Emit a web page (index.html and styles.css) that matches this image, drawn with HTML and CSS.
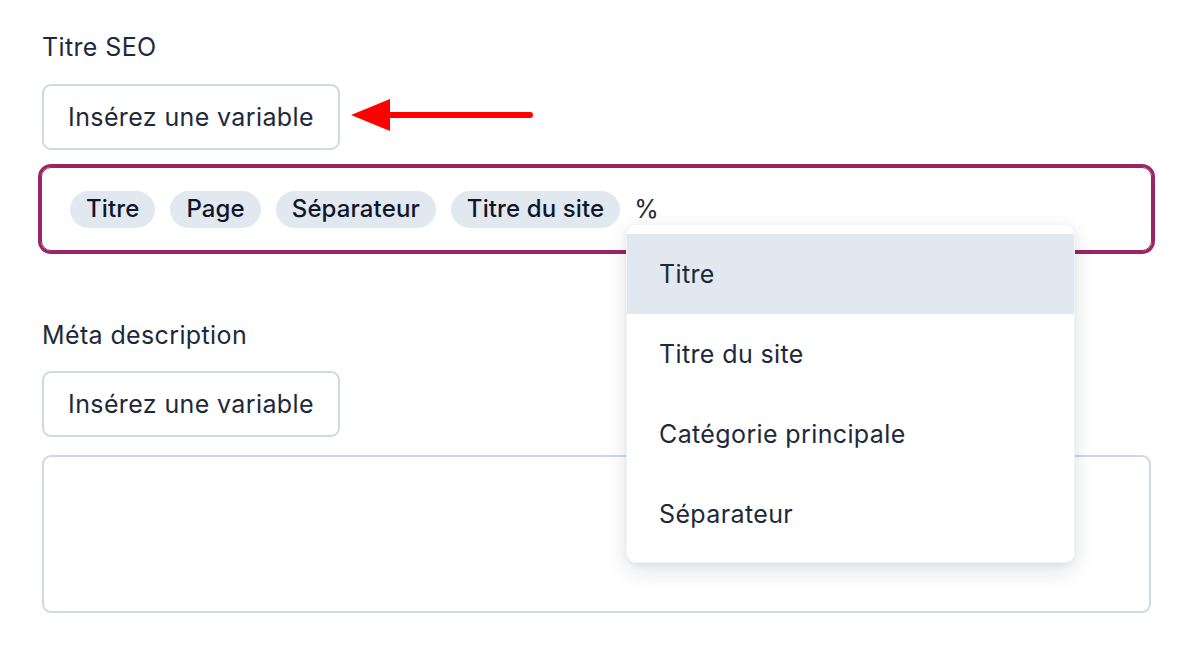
FILE: index.html
```html
<!DOCTYPE html>
<html lang="fr">
<head>
<meta charset="utf-8">
<title>SEO</title>
<link rel="stylesheet" href="styles.css">
</head>
<body>
<div class="page">
  <div class="field">
    <div class="label">Titre SEO</div>
    <div class="btn-row">
      <button class="var-btn">Insérez une variable</button>
      <svg class="arrow" width="184" height="34" viewBox="0 0 184 34">
        <polygon points="0,17 39,1 39,33" fill="#ff0000"/>
        <line x1="36" y1="17" x2="179" y2="17" stroke="#ff0000" stroke-width="6" stroke-linecap="round"/>
      </svg>
    </div>
    <div class="input focused">
      <span class="chip">Titre</span>
      <span class="chip">Page</span>
      <span class="chip">Séparateur</span>
      <span class="chip">Titre du site</span>
      <span class="typed">%</span>
      <div class="menu">
        <div class="item active">Titre</div>
        <div class="item">Titre du site</div>
        <div class="item">Catégorie principale</div>
        <div class="item">Séparateur</div>
      </div>
    </div>
  </div>
  <div class="field second">
    <div class="label">Méta description</div>
    <div class="btn-row">
      <button class="var-btn">Insérez une variable</button>
    </div>
    <div class="textarea"></div>
  </div>
</div>
</body>
</html>
```

FILE: styles.css
```css
* { box-sizing: border-box; }
html, body { margin: 0; padding: 0; background: #ffffff; }
body {
  font-family: Inter, "Noto Sans", "Liberation Sans", sans-serif;
  color: #1e293b;
  font-size: 25px;
  letter-spacing: 0.015em;
}
.page {
  padding: 32px 53px 0 42px;
}
.label {
  line-height: 30px;
  height: 30px;
  font-weight: 400;
}
.btn-row {
  display: flex;
  align-items: center;
  gap: 11px;
  margin-top: 22px;
}
.var-btn {
  font-family: inherit;
  font-size: 25px;
  letter-spacing: 0.015em;
  color: #1e293b;
  background: #fff;
  border: 2px solid #cfd8e3;
  border-radius: 9px;
  width: 298px;
  height: 66px;
  padding: 0;
  text-align: center;
  line-height: 1;
}
.arrow { display: block; margin-top: -4px; }
.input {
  position: relative;
  margin: 17px -1px 0;
  height: 84px;
  border: 1px solid #9b2462;
  box-shadow: 0 0 0 3px #9b2462;
  border-radius: 10px;
  display: flex;
  align-items: center;
  gap: 15px;
  padding: 0 28px;
}
.chip {
  background: #e2e8f0;
  border-radius: 999px;
  padding: 5px 16px 6px;
  line-height: 26px;
  font-size: 24px;
  letter-spacing: 0.005em;
  font-weight: 500;
  color: #0f172a;
}
.typed { margin-left: -1px; line-height: 26px; }
.menu {
  position: absolute;
  left: 584px;
  top: 56px;
  width: 449px;
  background: #fff;
  border-radius: 10px;
  border: 1px solid #f1f5f9;
  box-shadow: 0 8px 22px rgba(15, 23, 42, 0.12), 0 2px 6px rgba(15, 23, 42, 0.05);
  padding: 9px 0 8px;
  z-index: 5;
}
.item {
  height: 80px;
  display: flex;
  align-items: center;
  padding: 0 32px;
  line-height: 26px;
}
.item.active { background: #e2e8f0; }
.second { margin-top: 69px; }
.second .btn-row { margin-top: 21px; }
.textarea {
  margin-top: 18px;
  height: 158px;
  border: 2px solid #cfd8e3;
  border-radius: 9px;
}
```
